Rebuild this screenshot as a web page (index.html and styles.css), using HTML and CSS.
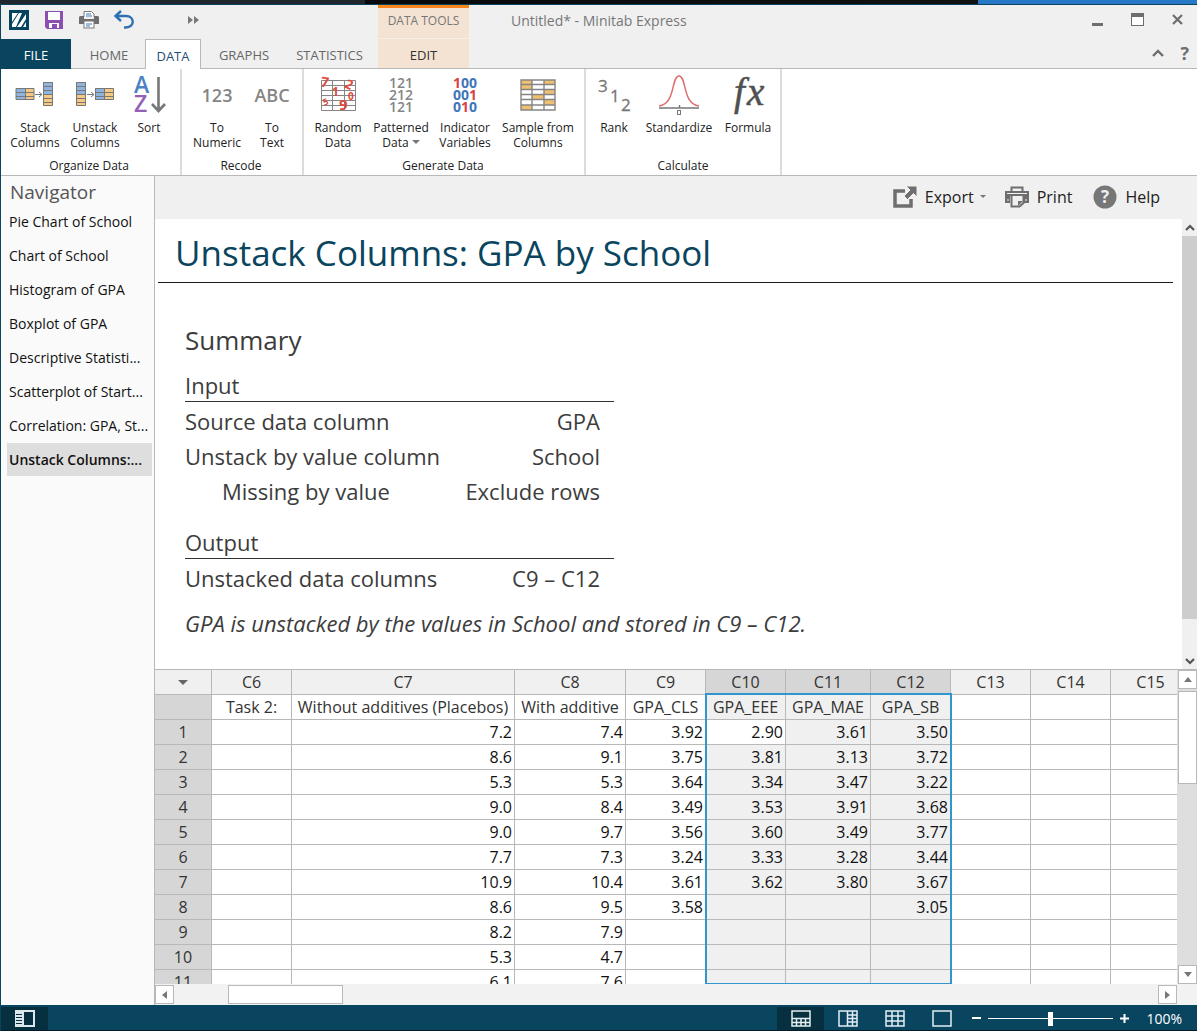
FILE: index.html
```html
<!DOCTYPE html>
<html lang="en">
<head>
<meta charset="utf-8">
<title>Untitled* - Minitab Express</title>
<link rel="stylesheet" href="styles.css">
</head>
<body>
<div class="desktop-strip"></div>
<div class="window">
  <header class="titlebar">
    <div class="quick">
      <svg class="logo" width="20" height="20" viewBox="0 0 20 20"><rect width="20" height="20" fill="#06435f"/><path d="M3 3h6L3 12zM10 3h3L7 17H3v-3zM17 4v5l-5 8H8zM17 12v5h-3z" fill="#fff"/></svg>
      <button class="tool" aria-label="Save"><svg width="18" height="18" viewBox="0 0 18 18"><path d="M0 0h18v18H2l-2-2z" fill="#8b4fb0"/><path d="M3 1h12v8H3zM4 12h10v5h-2v-4H7v4H4z" fill="#fff"/></svg></button>
      <button class="tool" aria-label="Print"><svg width="20" height="18" viewBox="0 0 20 18"><path d="M5 6V.500h7.500l2.500 2.500v3" fill="#fff" stroke="#777"/><path d="M7 3h5M7 5h6" stroke="#3c78b4"/><path d="M1 5h4v3h10V5h4l1 1v7H0V6z" fill="#6e6e6e"/><rect x="5" y="10" width="10" height="7" fill="#fff" stroke="#777"/><path d="M7 13h6M7 15h4" stroke="#3c78b4"/></svg></button>
      <button class="tool undo" aria-label="Undo"><svg width="20" height="18" viewBox="0 0 20 18"><path d="M1 5h11c9 0 9 11.500 0 11.500h-2M7 0L1.500 5 7 10" fill="none" stroke="#2f70b3" stroke-width="2.400"/></svg></button>
      <button class="tool more" aria-label="More"><svg width="11" height="8" viewBox="0 0 11 8"><path d="M0 0l5 4-5 4zM6 0l5 4-5 4z" fill="#777"/></svg></button>
    </div>
    <div class="context-title">DATA TOOLS</div>
    <div class="doc-title">Untitled* - Minitab Express</div>
    <div class="win-controls">
      <button class="tool" aria-label="Minimize"><svg width="13" height="13"><path d="M1 11.500h11" stroke="#6e6e6e" stroke-width="3"/></svg></button>
      <button class="tool" aria-label="Maximize"><svg width="13" height="13"><rect x=".5" y=".5" width="12" height="12" fill="#fff" stroke="#6e6e6e"/><path d="M0 2h13" stroke="#6e6e6e" stroke-width="4"/></svg></button>
      <button class="tool" aria-label="Close"><svg width="13" height="13"><path d="M2 2l9 9M11 2l-9 9" stroke="#6e6e6e" stroke-width="2.200"/></svg></button>
    </div>
  </header>
  <nav class="tabs">
    <button class="tab file">FILE</button>
    <button class="tab home">HOME</button>
    <button class="tab data">DATA</button>
    <button class="tab graphs">GRAPHS</button>
    <button class="tab stats">STATISTICS</button>
    <button class="tab edit">EDIT</button>
    <div class="tab-tools">
      <button class="tool" aria-label="Collapse ribbon"><svg width="12" height="8"><path d="M1 7l5-5 5 5" fill="none" stroke="#6e6e6e" stroke-width="2.400"/></svg></button>
      <button class="tool ask" aria-label="Help">?</button>
    </div>
  </nav>
  <section class="ribbon">
    <div class="group">
      <div class="items">
        <button class="item w60"><svg width="40" height="45" viewBox="0 -1 40 45"><path d="M1 12h9v12H1zM28 6h10v12H28z" fill="#8fb4de"/><path d="M10 12h9v12h-9zM28 18h10v12H28z" fill="#f6c982"/><path d="M1 12.500h18v11H1zM1 16.500h18M1 20.500h18M10.500 12v12M28.500 6.500h9v23h-9zM28 10.500h10M28 14.500h10M28 18.500h10M28 22.500h10M28 26.500h10M20 18.500h7M24 16l3 2.500-3 2.500" fill="none" stroke="#777"/></svg><span>Stack<br>Columns</span></button>
        <button class="item w60"><svg width="40" height="45" viewBox="0 -1 40 45"><path d="M1 6h10v12H1zM20 12h9v12h-9z" fill="#8fb4de"/><path d="M1 18h10v12H1zM29 12h9v12h-9z" fill="#f6c982"/><path d="M20.500 12.500h18v11h-18zM20 16.500h18M20 20.500h18M29.500 12v12M1.500 6.500h9v23h-9zM1 10.500h10M1 14.500h10M1 18.500h10M1 22.500h10M1 26.500h10M12 18.500h7M16 16l3 2.500-3 2.500" fill="none" stroke="#777"/></svg><span>Unstack<br>Columns</span></button>
        <button class="item w48"><svg width="34" height="45" viewBox="-1 -2 34 45"><g class="glyph semi" font-size="23"><text x="1" y="16" fill="#4a82c2">A</text><text x="1" y="35" fill="#9460b4">Z</text></g><path d="M25.500 0v34M19 27l6.500 7 6.500-7" fill="none" stroke="#777" stroke-width="2.600"/></svg><span>Sort</span></button>
      </div>
      <h2>Organize Data</h2>
    </div>
    <div class="group recode">
      <div class="items">
        <button class="item w62"><svg width="36" height="45"><text class="glyph semi" x="18" y="27" text-anchor="middle" font-size="18" fill="#858585">123</text></svg><span>To<br>Numeric</span></button>
        <button class="item w48"><svg width="40" height="45"><text class="glyph semi" x="20" y="27" text-anchor="middle" font-size="18" fill="#858585">ABC</text></svg><span>To<br>Text</span></button>
      </div>
      <h2>Recode</h2>
    </div>
    <div class="group generate">
      <div class="items">
        <button class="item w62"><svg width="38" height="45" viewBox="0 0 38 45"><path d="M2.500 5.500h34v30h-34zM2 10.500h34M2 15.500h34M2 20.500h34M2 25.500h34M2 30.500h34M13.500 5v30M25.500 5v30" fill="#fff" stroke="#858585"/><g class="glyph bold" fill="#e04a40"><text x="2" y="12" font-size="14" transform="rotate(8 6 6)">7</text><text x="26" y="14" font-size="13" transform="rotate(25 30 10)">2</text><text x="13" y="21" font-size="12">1</text><text x="4" y="30" font-size="9" transform="rotate(-20 7 27)">5</text><text x="29" y="25" font-size="10">0</text><text x="20" y="35" font-size="15">9</text></g></svg><span>Random<br>Data</span></button>
        <button class="item w64"><svg width="30" height="45"><g class="glyph semi" font-size="14" fill="#858585"><text x="3" y="13">121</text><text x="3" y="25">212</text><text x="3" y="37">121</text></g></svg><span>Patterned<br>Data <i class="caret"></i></span></button>
        <button class="item w64"><svg width="30" height="45"><g class="glyph bold" font-size="14" fill="#3f76b8"><text x="3" y="13"><tspan fill="#dc3f3f">1</tspan>00</text><text x="3" y="25">00<tspan fill="#dc3f3f">1</tspan></text><text x="3" y="37">0<tspan fill="#dc3f3f">1</tspan>0</text></g></svg><span>Indicator<br>Variables</span></button>
        <button class="item w82"><svg width="36" height="45" viewBox="0 -1 36 45"><path d="M1 4h34v30H1z" fill="#fff"/><path d="M1 4h11v9H1zM24 4h11v4H24zM24 13h11v5H24zM12 18h12v6H12zM24 24h11v5H24zM1 29h11v5H1z" fill="#f0c070"/><path d="M1 4h34v30H1zM1 8.500h34M1 13.500h34M1 18.500h34M1 23.500h34M1 29h34M12 4v30M24 4v30" fill="none" stroke="#858585" stroke-width="1.400"/></svg><span>Sample from<br>Columns</span></button>
      </div>
      <h2>Generate Data</h2>
    </div>
    <div class="group calculate">
      <div class="items">
        <button class="item w48"><svg width="34" height="45"><g class="glyph" fill="#777" stroke="#777" stroke-width=".3"><text x="1" y="17" font-size="17">3</text><text x="13" y="27" font-size="17">1</text><text x="24" y="36" font-size="17">2</text></g></svg><span>Rank</span></button>
        <button class="item w82"><svg width="42" height="45" viewBox="0 0 42 45"><path d="M1 31C18 29 13 1 21 1s3 28 20 30" fill="none" stroke="#df6e6e" stroke-width="1.500"/><path d="M1 33h40M21.500 30v3" stroke="#777" stroke-width="1.500"/><rect x="19.500" y="35.500" width="3" height="4" fill="none" stroke="#777"/></svg><span>Standardize</span></button>
        <button class="item w56"><svg width="38" height="45"><g class="fx" font-size="39" fill="#505050" stroke="#505050" stroke-width=".5"><text x="5" y="30">f</text><text x="18" y="30">x</text></g></svg><span>Formula</span></button>
      </div>
      <h2>Calculate</h2>
    </div>
  </section>

  <main class="workspace">
    <aside class="navigator">
      <h2>Navigator</h2>
      <ul>
        <li><a href="#">Pie Chart of School</a></li>
        <li><a href="#">Chart of School</a></li>
        <li><a href="#">Histogram of GPA</a></li>
        <li><a href="#">Boxplot of GPA</a></li>
        <li><a href="#">Descriptive Statisti...</a></li>
        <li><a href="#">Scatterplot of Start...</a></li>
        <li><a href="#">Correlation: GPA, St...</a></li>
        <li><a href="#" class="current">Unstack Columns:...</a></li>
      </ul>
    </aside>
    <div class="content">
      <div class="actions">
        <button class="action"><svg width="24" height="22" viewBox="0 0 24 22"><path d="M12 5H2v15h16v-7" fill="none" stroke="#6e6e6e" stroke-width="3.500"/><path d="M13 0h11v11l-3.500-3.500-6 6-3.500-3.500 6-6z" fill="#6e6e6e" stroke="#f0f0f0"/></svg>Export<i class="caret small"></i></button>
        <button class="action print"><svg width="24" height="22" viewBox="0 0 24 22"><path d="M6.500 5V1.500h11V5" fill="none" stroke="#6e6e6e" stroke-width="2"/><path d="M0 5h24v12h-5V10H5v7H0z" fill="#6e6e6e"/><path d="M2 7.500h20M2 14h2M20 14h2" stroke="#f0f0f0"/><path d="M6.500 10v10.500h8l4-3.500v-7" fill="#f0f0f0" stroke="#6e6e6e" stroke-width="2"/><path d="M13 20v-5h5z" fill="#6e6e6e"/></svg>Print</button>
        <button class="action help"><svg width="24" height="24"><circle cx="12" cy="12" r="11.500" fill="#777"/><text class="glyph bold" x="12" y="18" text-anchor="middle" font-size="17" fill="#f0f0f0">?</text></svg>Help</button>
      </div>
      <div class="report-pane">
        <article class="report">
          <h1>Unstack Columns: GPA by School</h1>
          <div class="report-body">
            <h2>Summary</h2>
            <table class="summary">
              <tr><th colspan="2">Input</th></tr>
              <tr><td>Source data column</td><td>GPA</td></tr>
              <tr><td>Unstack by value column</td><td>School</td></tr>
              <tr><td class="indent">Missing by value</td><td>Exclude rows</td></tr>
            </table>
            <table class="summary">
              <tr><th colspan="2">Output</th></tr>
              <tr><td>Unstacked data columns</td><td>C9 – C12</td></tr>
            </table>
            <p>GPA is unstacked by the values in School and stored in C9 – C12.</p>
          </div>
        </article>
        <div class="vscroll">
          <button class="tool" aria-label="Scroll up"><svg width="10" height="17"><path d="M1 11l4-4 4 4" fill="none" stroke="#555" stroke-width="2.200"/></svg></button>
          <div class="thumb"></div>
          <button class="tool" aria-label="Scroll down"><svg width="10" height="17"><path d="M1 7l4 4 4-4" fill="none" stroke="#555" stroke-width="2.200"/></svg></button>
        </div>
      </div>
      <div class="sheet-pane">
        <div class="sheet">
          <table class="grid">
            <colgroup><col class="c57"><col class="c80"><col class="c223"><col class="c111"><col class="c80"><col class="c80"><col class="c85"><col class="c80"><col class="c80"><col class="c80"><col class="c80"></colgroup>
            <thead>
              <tr><th><i class="caret big"></i></th><th>C6</th><th>C7</th><th>C8</th><th>C9</th><th class="picked">C10</th><th class="picked">C11</th><th class="picked">C12</th><th>C13</th><th>C14</th><th>C15</th></tr>
              <tr class="names"><th></th><td>Task 2:</td><td>Without additives (Placebos)</td><td>With additive</td><td>GPA_CLS</td><td class="sel">GPA_EEE</td><td class="sel">GPA_MAE</td><td class="sel">GPA_SB</td><td></td><td></td><td></td></tr>
            </thead>
            <tbody>
              <tr><th>1</th><td></td><td>7.2</td><td>7.4</td><td>3.92</td><td>2.90</td><td class="sel">3.61</td><td class="sel">3.50</td><td></td><td></td><td></td></tr>
              <tr><th>2</th><td></td><td>8.6</td><td>9.1</td><td>3.75</td><td class="sel">3.81</td><td class="sel">3.13</td><td class="sel">3.72</td><td></td><td></td><td></td></tr>
              <tr><th>3</th><td></td><td>5.3</td><td>5.3</td><td>3.64</td><td class="sel">3.34</td><td class="sel">3.47</td><td class="sel">3.22</td><td></td><td></td><td></td></tr>
              <tr><th>4</th><td></td><td>9.0</td><td>8.4</td><td>3.49</td><td class="sel">3.53</td><td class="sel">3.91</td><td class="sel">3.68</td><td></td><td></td><td></td></tr>
              <tr><th>5</th><td></td><td>9.0</td><td>9.7</td><td>3.56</td><td class="sel">3.60</td><td class="sel">3.49</td><td class="sel">3.77</td><td></td><td></td><td></td></tr>
              <tr><th>6</th><td></td><td>7.7</td><td>7.3</td><td>3.24</td><td class="sel">3.33</td><td class="sel">3.28</td><td class="sel">3.44</td><td></td><td></td><td></td></tr>
              <tr><th>7</th><td></td><td>10.9</td><td>10.4</td><td>3.61</td><td class="sel">3.62</td><td class="sel">3.80</td><td class="sel">3.67</td><td></td><td></td><td></td></tr>
              <tr><th>8</th><td></td><td>8.6</td><td>9.5</td><td>3.58</td><td class="sel"></td><td class="sel"></td><td class="sel">3.05</td><td></td><td></td><td></td></tr>
              <tr><th>9</th><td></td><td>8.2</td><td>7.9</td><td></td><td class="sel"></td><td class="sel"></td><td class="sel"></td><td></td><td></td><td></td></tr>
              <tr><th>10</th><td></td><td>5.3</td><td>4.7</td><td></td><td class="sel"></td><td class="sel"></td><td class="sel"></td><td></td><td></td><td></td></tr>
              <tr><th>11</th><td></td><td>6.1</td><td>7.6</td><td></td><td class="sel"></td><td class="sel"></td><td class="sel"></td><td></td><td></td><td></td></tr>
            </tbody>
          </table>
          <div class="selection"></div>
        </div>
        <div class="sheet-vscroll">
          <button class="arrow" aria-label="Scroll up"><svg width="8" height="5"><path d="M0 5l4-5 4 5z" fill="#777"/></svg></button>
          <div class="box-thumb"></div>
          <button class="arrow down" aria-label="Scroll down"><svg width="8" height="5"><path d="M0 0l4 5 4-5z" fill="#777"/></svg></button>
        </div>
      </div>
      <div class="sheet-hscroll">
        <button class="arrow" aria-label="Scroll left"><svg width="5" height="8"><path d="M5 0L0 4l5 4z" fill="#777"/></svg></button>
        <div class="box-thumb"></div>
        <button class="arrow right" aria-label="Scroll right"><svg width="5" height="8"><path d="M0 0l5 4-5 4z" fill="#777"/></svg></button>
      </div>
    </div>
  </main>

  <footer class="status">
    <button class="view on" aria-label="Navigator"><svg width="20" height="17"><path d="M0 0h20v17H0z" fill="#dce8ee"/><path d="M9 2h9v13H9z" fill="#06303f"/><path d="M1 4.500h6M1 7.500h6M1 10.500h6M1 13.500h6" stroke="#06303f"/></svg></button>
    <div class="views">
      <button class="view on" aria-label="Split below"><svg width="20" height="17"><path d="M1 1h18v15H1zM1 8.500h18M1 12.500h18M5.500 9v7M10 9v7M14.500 9v7" fill="none" stroke="#e4eef2" stroke-width="1.500"/></svg></button>
      <button class="view" aria-label="Split beside"><svg width="20" height="17"><path d="M1 1h18v15H1zM9.500 1v15M14.500 1v15M9 5h10M9 8.500h10M9 12h10" fill="none" stroke="#e4eef2" stroke-width="1.500"/></svg></button>
      <button class="view" aria-label="Data"><svg width="20" height="17"><path d="M1 1h18v15H1zM7 1v15M13 1v15M1 6h18M1 11h18" fill="none" stroke="#e4eef2" stroke-width="1.500"/></svg></button>
      <button class="view" aria-label="Output"><svg width="20" height="17"><path d="M1 1h18v15H1z" fill="none" stroke="#e4eef2" stroke-width="1.500"/></svg></button>
    </div>
    <button class="tool" aria-label="Zoom out"><svg width="9" height="9"><path d="M0 4h9" stroke="#fff" stroke-width="2"/></svg></button>
    <input class="zoom" type="range" min="0" max="200" value="100" aria-label="Zoom">
    <button class="tool" aria-label="Zoom in"><svg width="9" height="9"><path d="M0 4.500h9M4.500 0v9" stroke="#fff" stroke-width="2"/></svg></button>
    <span class="percent">100%</span>
  </footer>
</div>
</body>
</html>
```
FILE: styles.css
```css
* { box-sizing: border-box; }
html, body { height: 100%; }
body {
  margin: 0;
  display: flex;
  flex-direction: column;
  overflow: hidden;
  font-family: "Open Sans", "Noto Sans", sans-serif;
  font-size: 12px;
  color: #222;
}
h1, h2, p, ul { margin: 0; padding: 0; font-weight: 400; }
button { font: inherit; color: inherit; background: none; border: 0; padding: 0; margin: 0; }
svg { display: block; overflow: visible; }
.tool { display: flex; align-items: center; justify-content: center; }
.glyph { font-family: "Open Sans", sans-serif; }
.bold { font-weight: 700; }
.semi { font-weight: 600; }
.fx { font-family: "Liberation Serif", serif; font-style: italic; }
.caret {
  display: inline-block;
  border: 4px solid transparent;
  border-top: 4px solid #777;
  border-bottom: 0;
  vertical-align: 3px;
}
.caret.small { border-width: 3px 3px 0; }
.caret.big { border-width: 5px 5px 0; border-top-color: #666; }

.desktop-strip {
  flex: none;
  height: 5px;
  border-bottom: 1px solid #0a4560;
  background: linear-gradient(90deg, #20262d 365px, #08090b 365px, #111 978px, #2878c8 978px);
}
.window {
  flex: 1;
  min-height: 0;
  display: flex;
  flex-direction: column;
  background: #f0f0f0;
  border-left: 1px solid #0a4560;
}

.titlebar { flex: none; display: flex; height: 34px; }
.quick { width: 377px; display: flex; align-items: center; gap: 16px; padding: 0 0 4px 8px; }
.quick .more { margin-left: 38px; }
.quick .undo { margin-left: -1px; }
.context-title {
  width: 91px;
  background: #f4e3d3;
  border-top: 3px solid #f7861c;
  border-bottom: 1px solid #f9eee4;
  text-align: center;
  line-height: 26px;
  color: #777;
}
.doc-title { flex: 1; padding-left: 42px; font-size: 14px; line-height: 32px; color: #777; }
.win-controls { display: flex; gap: 27px; padding: 0 13px 6px 0; }

.tabs { flex: none; display: flex; height: 30px; border-bottom: 1px solid #b8b8b8; font-size: 13px; color: #666; }
.tab { height: 30px; padding-top: 2px; }
.file { width: 70px; background: #0a4560; color: #fff; }
.home { width: 74px; padding-left: 2px; }
.data { width: 56px; background: #fff; border: 1px solid #b8b8b8; border-bottom: 0; color: #1f4e79; }
.graphs { width: 86px; }
.stats { width: 91px; padding-right: 6px; }
.edit { width: 91px; height: 29px; background: #f4e3d3; color: #333; }
.tab-tools { flex: 1; display: flex; justify-content: flex-end; gap: 16px; padding: 0 8px 2px 0; }
.ask { font-size: 18px; font-weight: 700; color: #6e6e6e; }

.ribbon { flex: none; display: flex; height: 107px; background: #fff; border-bottom: 1px solid #b8b8b8; }
.group { display: flex; flex-direction: column; padding: 6px 7px 0 4px; border-right: 2px solid #dcdcdc; }
.group.recode { padding-right: 6px; }
.group.generate { padding: 6px 5px 0 3px; }
.group.calculate { padding-right: 4px; }
.items { flex: 1; display: flex; align-items: flex-start; }
.item { display: flex; flex-direction: column; align-items: center; line-height: 15px; white-space: nowrap; }
.item svg { flex: none; }
.group h2 { font-size: 12px; line-height: 18px; text-align: center; }
.w48 { width: 48px; }
.w56 { width: 56px; }
.w60 { width: 60px; }
.w62 { width: 62px; }
.w64 { width: 64px; }
.w82 { width: 82px; }

.workspace { flex: 1; min-height: 0; display: flex; }
.navigator { flex: none; width: 154px; background: #fafafa; border-right: 1px solid #b8b8b8; }
.navigator h2 { font-size: 19px; line-height: 32px; padding-left: 9px; color: #555; }
.navigator ul { list-style: none; padding: 0 2px 0 6px; margin-top: -3px; }
.navigator li { padding-bottom: 1px; }
.navigator a { display: block; padding: 1px 0 0 2px; font-size: 14px; line-height: 32px; color: #111; text-decoration: none; white-space: nowrap; }
.navigator .current { background: #dedede; font-weight: 600; }

.content { flex: 1; min-width: 0; display: flex; flex-direction: column; }
.actions { flex: none; display: flex; justify-content: flex-end; align-items: center; gap: 21px; height: 43px; padding: 0 37px 2px 0; }
.action { display: flex; align-items: center; gap: 8px; font-size: 16px; }
.action.print { margin-left: -2px; }
.action .caret { margin-left: -2px; }

.report-pane { flex: 1; min-height: 0; display: flex; background: #fff; }
.report { flex: 1; padding: 4px 9px 0 3px; overflow: hidden; color: #3c3c3c; }
.report h1 { padding-left: 17px; font-size: 35px; line-height: 59px; border-bottom: 1px solid #1a1a1a; color: #0a4560; }
.report-body { padding: 38px 0 0 27px; }
.report-body h2 { font-size: 26px; line-height: 38px; }
.summary { width: 429px; border-collapse: collapse; font-size: 22px; line-height: 32px; margin-bottom: 17px; }
.summary th { text-align: left; font-weight: 400; padding: 11px 0 0; line-height: 31px; border-bottom: 1px solid #333; }
.summary + .summary th { padding-top: 3px; }
.summary td { padding: 3px 0 0; }
.summary td:last-child { text-align: right; padding-right: 14px; }
.summary td.indent { padding-left: 37px; }
.report-body p { font-size: 22px; line-height: 30px; font-style: italic; margin-top: -3px; }

.vscroll { flex: none; width: 15px; background: #f0f0f0; display: flex; flex-direction: column; align-items: center; }
.vscroll .thumb { flex: 383; width: 15px; background: #cdcdcd; }
.vscroll .tool:last-child { margin-top: 33px; }

.sheet-pane { flex: none; display: flex; height: 315px; border-top: 1px solid #b8b8b8; background: #fff; }
.sheet { position: relative; flex: 1; overflow: hidden; }
.grid { width: 1036px; table-layout: fixed; border-collapse: separate; border-spacing: 0; font-size: 16px; line-height: 24px; }
.grid th, .grid td { height: 25px; padding: 0 2px; border: 0 solid #b8b8b8; border-width: 0 1px 1px 0; font-weight: 400; text-align: right; white-space: nowrap; overflow: hidden; }
.grid td { color: #111; }
.grid th { background: #d6d6d6; text-align: center; color: #333; }
.grid thead tr:first-child th { background: #f0f0f0; }
.grid thead tr:first-child .picked { background: #d6d6d6; }
.grid .names td { text-align: center; color: #333; }
.grid .sel { background: #f0f0f0; }
.c57 { width: 57px; }
.c80 { width: 80px; }
.c85 { width: 85px; }
.c111 { width: 111px; }
.c223 { width: 223px; }
.selection { position: absolute; left: 550px; top: 23px; width: 247px; bottom: 0; border: 2px solid #3096cc; border-bottom-width: 1px; }

.arrow { flex: none; display: flex; align-items: center; justify-content: center; width: 19px; height: 19px; background: #fff; border: 1px solid #b8b8b8; }
.box-thumb { background: #fff; border: 1px solid #b8b8b8; }
.sheet-vscroll { flex: none; width: 20px; background: #dedede; display: flex; flex-direction: column; padding-left: 1px; }
.sheet-vscroll .box-thumb { height: 93px; margin-top: 2px; }
.sheet-vscroll .down { margin-top: auto; }
.sheet-hscroll { flex: none; display: flex; align-items: center; height: 21px; background: #f2f2f2; padding-right: 20px; }
.sheet-hscroll .box-thumb { width: 115px; height: 19px; margin-left: 54px; }
.sheet-hscroll .right { margin-left: auto; }

.status { flex: none; display: flex; align-items: center; height: 26px; background: #0a4560; color: #fff; padding: 2px 15px 0 0; border-bottom: 1px solid #051c28; }
.view { display: flex; align-items: center; justify-content: center; width: 47px; height: 23px; }
.view.on { background: #06303f; }
.views { display: flex; margin-left: auto; margin-right: 7px; }
.zoom { appearance: none; width: 125px; height: 15px; margin: 0 7px; background: linear-gradient(#fff, #fff) center / 100% 1px no-repeat; }
.zoom::-webkit-slider-thumb { appearance: none; width: 5px; height: 14px; background: #fff; }
.percent { margin-left: 17px; font-size: 14px; }
```
